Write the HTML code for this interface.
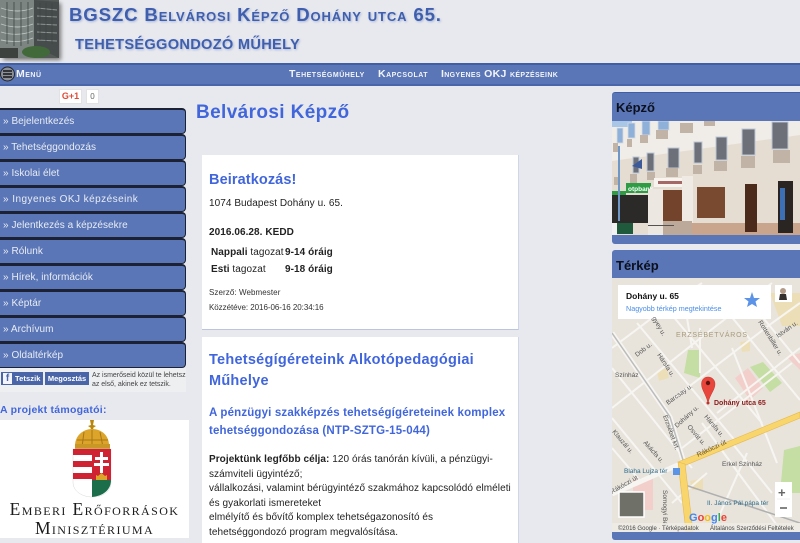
<!DOCTYPE html>
<html lang="hu"><head><meta charset="utf-8"><title>BGSZC Belvárosi Képző</title>
<style>
*{box-sizing:border-box}
html,body{margin:0;padding:0;width:800px;height:543px;overflow:hidden;background:#e8e9ee;font-family:"Liberation Sans",sans-serif;color:#222}
.a{position:absolute;white-space:nowrap}
#nav{position:absolute;left:0;top:63px;width:800px;height:23px;background:#5a76b6;border-top:2px solid #3f5ea6;border-bottom:2px solid #4a66aa}
.nv{position:absolute;top:68px;white-space:nowrap;font-size:10.5px;font-weight:bold;font-variant:small-caps;color:#f2f4fa;letter-spacing:.5px}
.side{position:absolute;left:0;width:186px;height:26px;background:#5a76b6;border:1px solid #1c2233;border-left:0;border-top-width:2px;border-radius:0 4px 4px 0;color:#e8ecf6;font-size:10px;letter-spacing:.05px;line-height:24px;padding-left:3px}
.card{position:absolute;left:202px;width:317px;background:#fff;border-right:1px solid #cfd6ea;border-bottom:1px solid #bcc5e0}
.blue{color:#4166dc;font-weight:bold}
.t{font-size:10px;letter-spacing:.06px;color:#222}
.panel{position:absolute;left:612px;width:188px;background:#5a76b6;border-radius:3px 0 0 3px}
.ph{position:absolute;left:616px;font-size:13px;font-weight:bold;color:#0c0f1c}
</style></head><body>

<!-- header -->
<svg class="a" style="left:0;top:0" width="66" height="64" viewBox="0 0 66 64">
<defs><filter id="b"><feGaussianBlur stdDeviation="2"/></filter></defs>
<rect x="3" y="3" width="58" height="57" fill="#777" filter="url(#b)"/>
<rect x="0" y="0" width="59" height="58" fill="#545a58"/>
<rect x="0" y="0" width="34" height="58" fill="#7c8582"/>
<polygon points="34,0 59,2 59,58 34,46" fill="#464c4c"/>
<g fill="none" stroke="#bfc6c4" stroke-width=".9"><path d="M1 8Q18 14 33 8M1 16Q18 22 33 16M1 24Q18 30 33 24M1 32Q18 37 33 31M1 40Q18 44 33 38"/><path d="M37 8L57 10M37 16L57 17M37 24L57 25M37 32L57 33M37 40L57 41" stroke="#8d9492"/></g>
<path d="M7 2V44M14 2V46M21 2V46M28 2V44M40 3V40M46 3V42M52 3V44" stroke="#3f4544" stroke-width=".8"/>
<ellipse cx="36" cy="52" rx="14" ry="6" fill="#41693a"/><rect x="0" y="48" width="18" height="10" fill="#3d423f"/>
</svg>
<div class="a" style="left:69px;top:4px;font-size:18.6px;font-weight:bold;font-variant:small-caps;color:#3f5fae;letter-spacing:.86px;text-shadow:1px 1px 2px #a9b6d6">BGSZC Belvárosi Képző Dohány utca 65.</div>
<div class="a" style="left:75px;top:37px;font-size:14.6px;font-weight:bold;color:#3f5fae;letter-spacing:.3px;text-shadow:1px 1px 2px #a9b6d6">TEHETSÉGGONDOZÓ MŰHELY</div>

<!-- nav -->
<div id="nav"></div>
<svg class="a" style="left:0;top:66px" width="16" height="16" viewBox="0 0 16 16"><circle cx="7.500" cy="8" r="7" fill="#8b8f96" stroke="#23262c" stroke-width="1"/><path d="M3 5H12M3 8H12M3 11H12" stroke="#14161a" stroke-width="1.600"/></svg>
<div class="nv" style="left:16px">Menü</div>
<div class="nv" style="left:289px">Tehetségműhely</div>
<div class="nv" style="left:378px">Kapcsolat</div>
<div class="nv" style="left:441px;letter-spacing:.34px">Ingyenes OKJ képzéseink</div>

<!-- g+1 -->
<div class="a" style="left:59px;top:89px;width:23px;height:15px;background:#fff;border:1px solid #e2e2e2;color:#dd4b39;font-size:9px;font-weight:bold;text-align:center;line-height:13px">G+1</div>
<div class="a" style="left:86px;top:89px;width:13px;height:15px;background:#fff;border:1px solid #e2e2e2;color:#666;font-size:8px;text-align:center;line-height:13px">0</div>

<!-- sidebar -->
<div class="side" style="top:108px">» Bejelentkezés</div>
<div class="side" style="top:134px">» Tehetséggondozás</div>
<div class="side" style="top:160px">» Iskolai élet</div>
<div class="side" style="top:186px;letter-spacing:.45px">» Ingyenes OKJ képzéseink</div>
<div class="side" style="top:212px">» Jelentkezés a képzésekre</div>
<div class="side" style="top:238px">» Rólunk</div>
<div class="side" style="top:264px">» Hírek, információk</div>
<div class="side" style="top:290px">» Képtár</div>
<div class="side" style="top:316px">» Archívum</div>
<div class="side" style="top:342px">» Oldaltérkép</div>

<!-- fb -->
<div class="a" style="left:0;top:368px;width:186px;height:24px;background:#eeeff1"></div>
<div class="a" style="left:1px;top:372px;width:42px;height:13px;background:#4a66a8;color:#fff;font-size:7.500px;font-weight:bold;line-height:13px;padding-left:14px;letter-spacing:.1px">Tetszik</div>
<div class="a" style="left:3px;top:373px;width:9px;height:11px;background:#f3f5fa;color:#4a66a8;font-size:10px;font-weight:bold;line-height:12px;text-align:center">f</div>
<div class="a" style="left:45px;top:372px;width:44px;height:13px;background:#4a66a8;color:#fff;font-size:7.500px;font-weight:bold;line-height:13px;text-align:center">Megosztás</div>
<div class="a" style="left:92px;top:371px;font-size:7px;line-height:9px;color:#444;letter-spacing:-.02px">Az ismerőseid közül te lehetsz<br>az első, akinek ez tetszik.</div>

<div class="a blue" style="left:0;top:404px;font-size:10.500px;letter-spacing:.25px">A projekt támogatói:</div>
<div class="a" style="left:0;top:420px;width:189px;height:118px;background:#fff"></div>
<svg class="a" style="left:70px;top:420px" width="46" height="80" viewBox="0 0 46 80">
<path d="M20 0L24 0 23 5 26 6 23 8 24 10H20L21 8 18 6 21 5Z" fill="#b8860b"/>
<path d="M5 28C4 15 14 9 22 9C31 9 40 15 39 28Z" fill="#dda42a"/>
<path d="M14 12L12 27M22 10V27M30 12L33 27M7 20H38" stroke="#a87618" stroke-width="1" fill="none"/>
<rect x="5" y="24" width="35" height="5" fill="#c99726"/>
<path d="M3 29H41V62C41 72 32 77 22.500 77C13 77 3 72 3 62Z" fill="#fff" stroke="#d8d8d8" stroke-width=".5"/>
<path d="M22 29H41V60H22Z" fill="#cf2233"/>
<path d="M22 60H41C41 70 33 76 22 77Z" fill="#1c6e4a"/>
<path d="M3 29H22V35H3ZM3 41H22V47H3ZM3 53H22V59H3Z" fill="#cf2233"/>
<path d="M30 32H33V37H38V40H33V43H39V46H33V53H30V46H24V43H30V40H25V37H30Z" fill="#fff"/>
<path d="M26 60V55L28 56 31.500 53 35 56 37 55V60Z" fill="#dda42a"/>
</svg>
<div class="a" style="left:0;top:500px;width:189px;text-align:center;font-family:'Liberation Serif',serif;font-size:17.5px;color:#1c1c1c;letter-spacing:1.4px;font-variant:small-caps;line-height:18.5px">Emberi Erőforrások<br>Minisztériuma</div>

<!-- main -->
<div class="a blue" style="left:196px;top:102px;font-size:19px;letter-spacing:.38px">Belvárosi Képző</div>

<div class="card" style="top:155px;height:175px"></div>
<div class="a blue" style="left:209px;top:172px;font-size:14.500px;letter-spacing:.1px">Beiratkozás!</div>
<div class="a t" style="left:209px;top:198px">1074 Budapest Dohány u. 65.</div>
<div class="a t" style="left:209px;top:227px;font-weight:bold">2016.06.28. KEDD</div>
<div class="a t" style="left:211px;top:247px"><b>Nappali</b> tagozat</div>
<div class="a t" style="left:285px;top:247px;font-weight:bold">9-14 óráig</div>
<div class="a t" style="left:211px;top:264px"><b>Esti</b> tagozat</div>
<div class="a t" style="left:285px;top:264px;font-weight:bold">9-18 óráig</div>
<div class="a" style="left:209px;top:288px;font-size:8px;letter-spacing:.08px;color:#333">Szerző: Webmester</div>
<div class="a" style="left:209px;top:303px;font-size:8px;letter-spacing:-.05px;color:#333">Közzétéve: 2016-06-16 20:34:16</div>

<div class="card" style="top:337px;height:206px;border-bottom:0"></div>
<div class="a blue" style="left:209px;top:350px;font-size:14.500px;letter-spacing:.25px;line-height:21px">Tehetségígéreteink Alkotópedagógiai<br>Műhelye</div>
<div class="a blue" style="left:209px;top:405px;font-size:11.500px;letter-spacing:.16px;line-height:17.500px">A pénzügyi szakképzés tehetségígéreteinek komplex<br>tehetséggondozása (NTP-SZTG-15-044)</div>
<div class="a" style="left:209px;top:453px;font-size:10px;letter-spacing:.06px;line-height:14.600px;color:#222"><b>Projektünk legfőbb célja:</b> 120 órás tanórán kívüli, a pénzügyi-<br>számviteli ügyintéző;<br>vállalkozási, valamint bérügyintéző szakmához kapcsolódó elméleti<br>és gyakorlati ismereteket<br>elmélyítő és bővítő komplex tehetségazonosító és<br>tehetséggondozó program megvalósítása.</div>

<!-- right -->
<div class="panel" style="top:92px;height:152px;border-top:1px solid #3f5ea6"></div>
<div class="ph" style="top:100px">Képző</div>
<svg class="a" style="left:612px;top:121px" width="188" height="114" viewBox="0 0 188 114">
<rect width="188" height="114" fill="#e6ddd2"/>
<polygon points="0,0 188,0 188,14 0,40" fill="#f0ece8"/>
<rect x="0" y="0" width="20" height="6" fill="#a9c6e6"/>
<g fill="#8fb0d8" stroke="#d5dbe4" stroke-width=".8"><rect x="5" y="7" width="6" height="15"/><rect x="16" y="2" width="7" height="15"/><rect x="30" y="0" width="8" height="14"/><rect x="46" y="0" width="11" height="9"/></g>
<g fill="#6d7078" stroke="#bcc6d4" stroke-width="1"><rect x="21" y="36" width="6" height="16"/><rect x="35" y="32" width="7" height="18"/><rect x="56" y="27" width="11" height="20"/><rect x="82" y="21" width="8" height="21"/><rect x="104" y="16" width="11" height="23"/><rect x="130" y="8" width="13" height="26"/><rect x="160" y="1" width="16" height="27"/></g>
<g fill="#c1b4a6"><rect x="1" y="22" width="5" height="9"/><rect x="15" y="18" width="5" height="8"/><rect x="28" y="14" width="8" height="8"/><rect x="44" y="9" width="12" height="9"/><rect x="68" y="2" width="13" height="10"/><rect x="92" y="0" width="11" height="5"/><rect x="2" y="56" width="5" height="8"/><rect x="18" y="53" width="7" height="9"/><rect x="35" y="51" width="8" height="8"/><rect x="54" y="47" width="12" height="9"/><rect x="81" y="44" width="9" height="9"/><rect x="102" y="40" width="13" height="10"/><rect x="129" y="35" width="14" height="12"/><rect x="161" y="29" width="17" height="13"/></g>
<rect x="0" y="70" width="14" height="4" fill="#2d9c45"/><rect x="14" y="62" width="25" height="10" fill="#2d9c45"/><text x="16" y="70" font-size="6.500" font-weight="bold" fill="#fff" font-family="Liberation Sans">otpbank</text>
<rect x="42" y="57" width="33" height="9" fill="#f7f3ee"/><rect x="46" y="60" width="26" height="3" fill="#8a3a3a" opacity=".75"/>
<rect x="0" y="74" width="36" height="28" fill="#2b2a28"/>
<rect x="36" y="68" width="15" height="46" fill="#ece7e0"/>
<rect x="51" y="69" width="19" height="31" fill="#74432b"/>
<rect x="70" y="55" width="11" height="59" fill="#efeae4"/>
<rect x="85" y="66" width="28" height="31" fill="#7a4a30"/>
<rect x="80" y="102" width="108" height="12" fill="#c9a58e"/>
<rect x="51" y="100" width="29" height="14" fill="#bda99a"/>
<rect x="133" y="63" width="12" height="48" fill="#4b2a1c"/>
<rect x="166" y="60" width="15" height="52" fill="#2a2422"/>
<rect x="5" y="102" width="16" height="11" fill="#1f5a3c"/><rect x="0" y="102" width="5" height="12" fill="#f2f2f2"/><rect x="36" y="104" width="26" height="1" fill="#55514e"/>
<rect x="6" y="25" width="2" height="75" fill="#6e97c8"/><rect x="168" y="67" width="5" height="32" fill="#3d6fb5"/>
<path d="M20 45L30 38 30 48Z" fill="#3c5a9a"/>
</svg>

<div class="panel" style="top:250px;height:290px"></div>
<div class="ph" style="top:258px">Térkép</div>
<svg class="a" style="left:612px;top:278px" width="188" height="254" viewBox="0 0 188 254" font-family="Liberation Sans">
<rect width="188" height="254" fill="#e8e4dc"/>
<path d="M123 100L136 90 151 110 138 122ZM175 79L188 75V92ZM21 202L41 198V232H21Z" fill="#f3cfcb"/>
<path d="M138 89L151 84 170 105 158 114ZM76 72L88 72V100L72 95ZM172 172L188 168V215H168Z" fill="#c5dea4"/>
<path d="M158 15H188V48H170ZM128 64L138 62 138 73 130 74ZM45 94L55 90 57 100 47 103ZM78 203L91 200V212H80Z" fill="#ecdfb8"/>
<g stroke="#f7f5f1" stroke-width="2" fill="none">
<path d="M0 90L80 190M0 140L70 225M25 45L125 165M50 25L150 145M100 15L188 122M135 20L188 85M90 145L130 200 170 254M120 165L160 215M0 170L30 205"/>
<path d="M0 70L60 25 90 5M0 130L95 55 160 5M62 120L160 45 188 25M70 170L180 85M105 135L188 70M95 195L60 225M135 175L100 254"/>
<path d="M88 50V95M75 40L80 70M120 70L165 185"/>
</g>
<path d="M0 216L68 186" stroke="#f7f5f1" stroke-width="5"/>
<path d="M0 55L58 139 71 182" stroke="#f7f5f1" stroke-width="5" fill="none"/>
<path d="M0 55L58 139 71 182" stroke="#bcbcbc" stroke-width="1.500" fill="none"/>
<path d="M73 207L188 245" stroke="#b0b0b0" stroke-width="1.500" fill="none"/>
<path d="M66 184L188 134V140L74 187Z" fill="#f9d66d" stroke="#e7b94a" stroke-width=".6"/>
<path d="M66 184L74 254H81L73 186Z" fill="#f9d66d" stroke="#e7b94a" stroke-width=".6"/>
<rect x="6" y="7" width="153" height="34" fill="#fff"/>
<text x="14" y="21" font-size="8.500" font-weight="bold" fill="#111">Dohány u. 65</text>
<text x="14" y="33" font-size="7.200" fill="#4a8ee8">Nagyobb térkép megtekintése</text>
<path d="M140 14L142 20 148 20 143.500 23.500 145 29 140 26 135 29 136.500 23.500 132 20 138 20Z" fill="#5b93e6"/>
<rect x="163" y="7" width="17" height="17" fill="#fff"/><circle cx="171" cy="13" r="3" fill="#b29a86"/><path d="M167 22L168 16H174L175 22Z" fill="#33302e"/>
<path d="M96 99C92 99 89.500 102 89.500 106C89.500 112 94 116 96 125C98 116 103 112 103 106C103 102 100 99 96 99Z" fill="#e8453c" stroke="#c5352e" stroke-width=".5"/>
<circle cx="96" cy="105" r="2.200" fill="#5c1310"/>
<circle cx="96" cy="125" r="1.500" fill="#c0332c"/>
<text x="102" y="127" font-size="7" font-weight="bold" fill="#8b1a1a">Dohány utca 65</text>
<g font-size="6.500" fill="#555">
<text transform="translate(146,44) rotate(58)">Rottenbiller u.</text>
<text transform="translate(166,60) rotate(-35)">István u.</text>
<text transform="translate(25,79) rotate(-37)">Dob u.</text>
<text transform="translate(40,40) rotate(60)">gyey u.</text>
<text transform="translate(45,77) rotate(57)">Hársfa u.</text>
<text x="3" y="99">Színház</text>
<text transform="translate(56,127) rotate(-36)">Barcsay u.</text>
<text transform="translate(65,150) rotate(-42)">Dohány u.</text>
<text transform="translate(75,149) rotate(50)">Osvát u.</text>
<text transform="translate(92,139) rotate(50)">Hársfa u.</text>
<text transform="translate(51,138) rotate(70)">Erzsébet krt.</text>
<text transform="translate(31,165) rotate(48)">Akácfa u.</text>
<text transform="translate(0,154) rotate(50)">Klauzál u.</text>
<text transform="translate(86,179) rotate(-25)" font-size="6.800" fill="#6a5528">Rákóczi út</text>
<text transform="translate(0,216) rotate(-30)">Rákóczi út</text>
<text x="110" y="188">Erkel Színház</text>
<text x="12" y="195" fill="#2a6a8a">Blaha Lujza tér</text>
<text x="95" y="227" fill="#2a6a8a">II. János Pál pápa tér</text>
<text transform="translate(51,212) rotate(90)">Somogyi Béla</text>
</g>
<text x="64" y="59" font-size="7" letter-spacing=".8" fill="#a79a7c">ERZSÉBETVÁROS</text>
<rect x="61" y="190" width="7" height="7" fill="#5b93e6"/>
<rect x="7" y="214" width="25" height="25" fill="#6f7168" stroke="#fff" stroke-width="1.500"/>
<rect x="163" y="204" width="17" height="35" fill="#fff"/><text x="166" y="219" font-size="13" font-weight="bold" fill="#666">+</text><path d="M168 230H175" stroke="#666" stroke-width="1.600"/><path d="M165 221H178" stroke="#e6e6e6" stroke-width=".6"/>
<rect x="0" y="245" width="188" height="9" fill="#efece6" opacity=".85"/>
<text x="77" y="243" font-size="11" font-weight="bold"><tspan fill="#4285f4">G</tspan><tspan fill="#ea4335">o</tspan><tspan fill="#fbbc05">o</tspan><tspan fill="#4285f4">g</tspan><tspan fill="#34a853">l</tspan><tspan fill="#ea4335">e</tspan></text>
<text x="6" y="252" font-size="6" fill="#444">©2016 Google · Térképadatok</text><text x="98" y="252" font-size="6" fill="#444">Általános Szerződési Feltételek</text>
</svg>
</body></html>
